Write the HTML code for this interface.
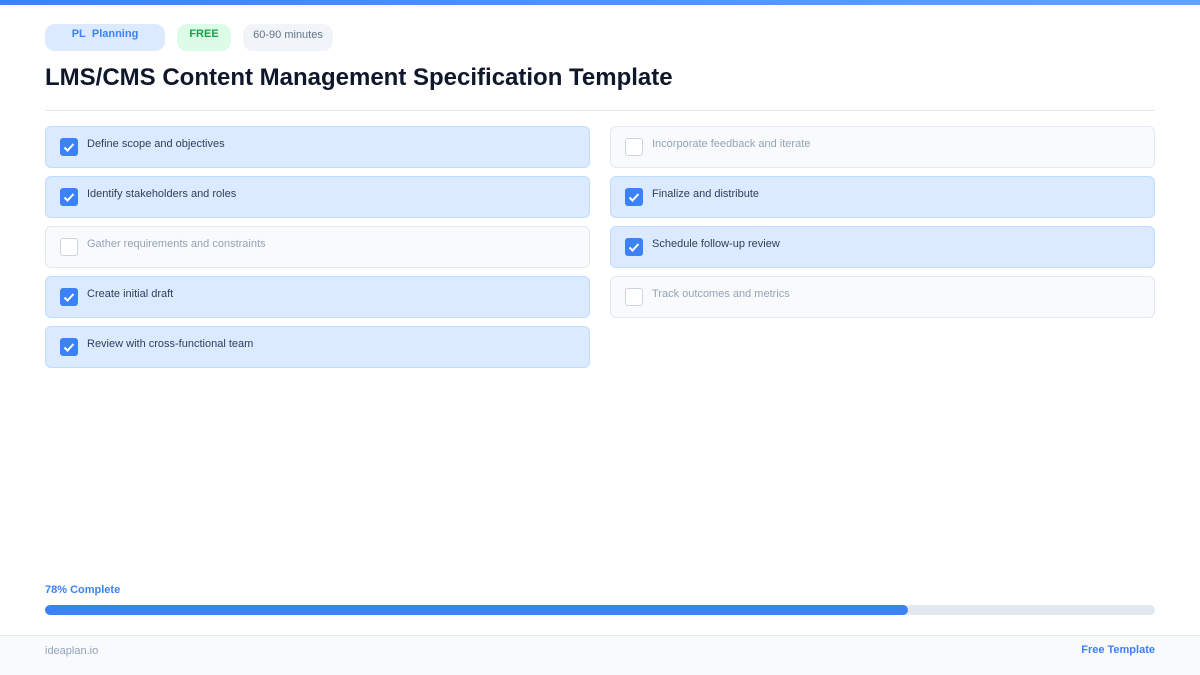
<!DOCTYPE html>
<html><head><style>
*{margin:0;padding:0;box-sizing:border-box}
body{width:1200px;height:675px;position:relative;background:#fff;font-family:"Liberation Sans",Arial,sans-serif;overflow:hidden}
.top{position:absolute;left:0;top:0;width:1200px;height:5px;background:linear-gradient(90deg,#3b82f6,#60a5fa)}
.pill{position:absolute;top:24px;height:27px;border-radius:10px;font-size:11px;padding-top:4px;text-align:center}
h1{position:absolute;left:45px;top:64px;font-size:24px;font-weight:bold;color:#0f172a;white-space:nowrap}
.hr{position:absolute;left:45px;top:110px;width:1110px;height:1px;background:#e2e8f0}
.card{position:absolute;width:545px;height:42px;border-radius:6px;border:1px solid #bfdbfe;background:#dbeafe}
.card.off{background:#f8fafc;border-color:#e2e8f0}
.cb{position:absolute;left:14px;top:11px;width:18px;height:18px;border-radius:3px;background:#3b82f6}
.off .cb{background:#fff;border:1.5px solid #cbd5e1}
.card span{position:absolute;left:41px;top:11px;font-size:11px;color:#334155}
.off span{color:#94a3b8}
</style></head><body>
<div class="top"></div>
<div class="pill" style="left:45px;width:120px;background:#dbeafe;color:#3b82f6;font-weight:bold">PL&nbsp; Planning</div>
<div class="pill" style="left:177px;width:54px;background:#dcfce7;color:#16a34a;font-weight:bold">FREE</div>
<div class="pill" style="left:243px;width:90px;background:#f1f5f9;color:#64748b;padding-top:5px">60-90 minutes</div>
<h1>LMS/CMS Content Management Specification Template</h1>
<div class="hr"></div>
<div class="card" style="left:45px;top:126px"><div class="cb"><svg width="18" height="18"><path d="M4.5 9.5l3 3 6-6.5" stroke="#fff" stroke-width="2" fill="none"/></svg></div><span>Define scope and objectives</span></div>
<div class="card" style="left:45px;top:176px"><div class="cb"><svg width="18" height="18"><path d="M4.5 9.5l3 3 6-6.5" stroke="#fff" stroke-width="2" fill="none"/></svg></div><span>Identify stakeholders and roles</span></div>
<div class="card off" style="left:45px;top:226px"><div class="cb"></div><span>Gather requirements and constraints</span></div>
<div class="card" style="left:45px;top:276px"><div class="cb"><svg width="18" height="18"><path d="M4.5 9.5l3 3 6-6.5" stroke="#fff" stroke-width="2" fill="none"/></svg></div><span>Create initial draft</span></div>
<div class="card" style="left:45px;top:326px"><div class="cb"><svg width="18" height="18"><path d="M4.5 9.5l3 3 6-6.5" stroke="#fff" stroke-width="2" fill="none"/></svg></div><span>Review with cross-functional team</span></div>
<div class="card off" style="left:610px;top:126px"><div class="cb"></div><span>Incorporate feedback and iterate</span></div>
<div class="card" style="left:610px;top:176px"><div class="cb"><svg width="18" height="18"><path d="M4.5 9.5l3 3 6-6.5" stroke="#fff" stroke-width="2" fill="none"/></svg></div><span>Finalize and distribute</span></div>
<div class="card" style="left:610px;top:226px"><div class="cb"><svg width="18" height="18"><path d="M4.5 9.5l3 3 6-6.5" stroke="#fff" stroke-width="2" fill="none"/></svg></div><span>Schedule follow-up review</span></div>
<div class="card off" style="left:610px;top:276px"><div class="cb"></div><span>Track outcomes and metrics</span></div>
<div style="position:absolute;left:45px;top:584px;font-size:11px;font-weight:bold;color:#3b82f6">78% Complete</div>
<div style="position:absolute;left:45px;top:605px;width:1110px;height:10px;border-radius:5px;background:#e2e8f0"><div style="width:863px;height:10px;border-radius:5px;background:#3b82f6"></div></div>
<div style="position:absolute;left:0;top:635px;width:1200px;height:40px;background:#f8fafc;border-top:1px solid #e2e8f0"></div>
<div style="position:absolute;left:45px;top:645px;font-size:11px;color:#94a3b8">ideaplan.io</div>
<div style="position:absolute;right:45px;top:644px;font-size:11px;font-weight:bold;color:#3b82f6">Free Template</div>
</body></html>
